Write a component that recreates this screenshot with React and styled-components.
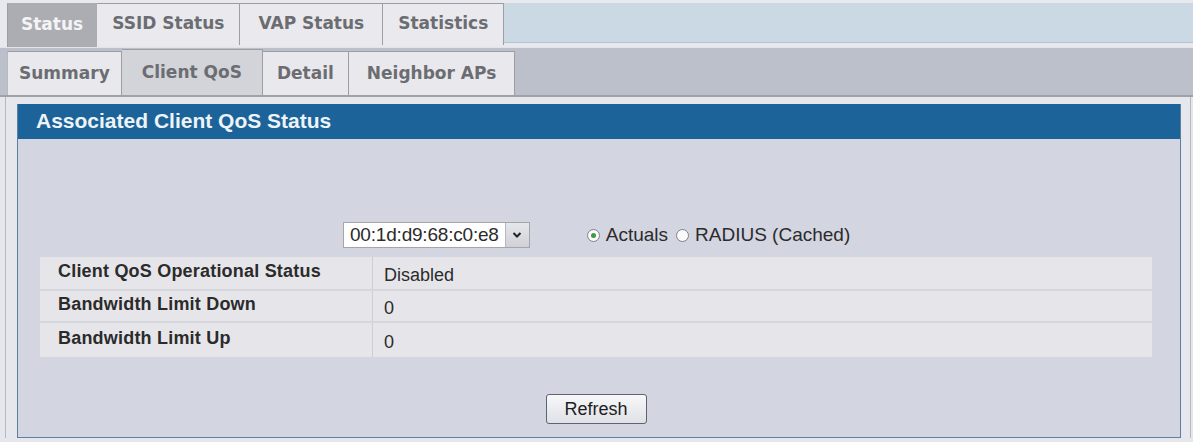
import React, { useState } from 'react';
import styled, { createGlobalStyle, css } from 'styled-components';

const GlobalStyle = createGlobalStyle`
  html, body {
    margin: 0;
    padding: 0;
    background: #e6e7ec;
  }
  body {
    font-family: "Liberation Sans", Arial, sans-serif;
  }
`;

const macs = ['00:1d:d9:68:c0:e8'];

const qosRows = [
  { label: 'Client QoS Operational Status', value: 'Disabled', height: 33 },
  { label: 'Bandwidth Limit Down', value: '0', height: 32 },
  { label: 'Bandwidth Limit Up', value: '0', height: 35 },
];

const App = () => {
  const [mode, setMode] = useState('actuals');

  return (
    <>
      <GlobalStyle />
      <Page>
        <TopTabs>
          <TopTab active pad={13}>Status</TopTab>
          <TopTab pad={15}>SSID Status</TopTab>
          <TopTab pad={18}>VAP Status</TopTab>
          <TopTab pad={15}>Statistics</TopTab>
          <TopFill />
        </TopTabs>

        <SubTabs>
          <SubTab pad={11}>Summary</SubTab>
          <SubTab active pad={20}>Client QoS</SubTab>
          <SubTab pad={14}>Detail</SubTab>
          <SubTab pad={18}>Neighbor APs</SubTab>
        </SubTabs>

        <Content>
          <Panel>
            <PanelHeader>Associated Client QoS Status</PanelHeader>
            <PanelBody>
              <Controls>
                <MacSelect>
                  <MacValue>{macs[0]}</MacValue>
                  <Arrow>
                    <svg width="10" height="8" viewBox="0 0 10 8">
                      <path d="M1.5 2 L5 5.5 L8.5 2" fill="none" stroke="#222" strokeWidth="2" />
                    </svg>
                  </Arrow>
                </MacSelect>
                <RadioGroup>
                  <RadioLabel onClick={() => setMode('actuals')}>
                    <Radio checked={mode === 'actuals'} />
                    Actuals
                  </RadioLabel>
                  <RadioLabel onClick={() => setMode('radius')}>
                    <Radio checked={mode === 'radius'} />
                    RADIUS (Cached)
                  </RadioLabel>
                </RadioGroup>
              </Controls>

              <QosTable>
                <tbody>
                  {qosRows.map((row) => (
                    <QosRow key={row.label} h={row.height}>
                      <LabelCell>{row.label}</LabelCell>
                      <ValueCell>{row.value}</ValueCell>
                    </QosRow>
                  ))}
                </tbody>
              </QosTable>

              <Actions>
                <RefreshButton type="button">Refresh</RefreshButton>
              </Actions>
            </PanelBody>
          </Panel>
        </Content>
      </Page>
    </>
  );
};

export default App;

const tabFont = css`
  font-family: "DejaVu Sans", Verdana, sans-serif;
  font-weight: bold;
  font-size: 17px;
  color: #6b6d72;
`;

const Page = styled.div`
  width: 1193px;
  height: 442px;
  overflow: hidden;
  background: #e6e7ec;
`;

const TopTabs = styled.div`
  display: flex;
  align-items: stretch;
  height: 47px;
  padding: 3px 0 0 7px;
  box-sizing: border-box;
  background: #e8e9ee;
`;

const TopTab = styled.div`
  ${tabFont};
  display: flex;
  align-items: center;
  padding: 0 ${({ pad }) => pad}px 3px;
  background: #eaeaee;
  border: 1px solid #9c9ea4;
  border-left: none;
  border-bottom: none;
  height: 42px;
  box-sizing: border-box;

  &:first-child {
    border-left: 1px solid #9c9ea4;
  }

  ${({ active }) =>
    active &&
    css`
      background: #abadb2;
      color: #f4f4f6;
      height: 44px;
      border-color: #abadb2;
    `}
`;

const TopFill = styled.div`
  flex: 1;
  height: 39px;
  background: #cad9e4;
  border-bottom: 1px solid #b4c3ce;
`;

const SubTabs = styled.div`
  display: flex;
  align-items: flex-end;
  height: 50px;
  padding: 0 0 0 7px;
  box-sizing: border-box;
  background: linear-gradient(#e3e4ea 0, #e3e4ea 1px, #bcc0cb 1px);
  border-bottom: 2px solid #9ea1a8;
`;

const SubTab = styled.div`
  ${tabFont};
  display: flex;
  align-items: center;
  height: 44px;
  padding: 0 ${({ pad }) => pad}px 2px;
  box-sizing: border-box;
  background: #e9e9ed;
  border: 1px solid #9c9ea4;
  border-left: none;
  border-bottom: none;

  &:first-child {
    border-left: 1px solid #b8bac0;
  }

  ${({ active }) =>
    active &&
    css`
      background: #d3d4d9;
      height: 46px;
    `}
`;

const Content = styled.div`
  margin: 0 2px 0 5px;
  padding: 7px 9px 0 11px;
  border-left: 1px solid #b5b8c0;
  border-right: 1px solid #b5b8c0;
`;

const Panel = styled.div`
  border: 1px solid #5a7fa0;
  border-top: none;
  background: #d3d6e0;
  height: 334px;
  box-sizing: border-box;
  display: flex;
  flex-direction: column;
`;

const PanelHeader = styled.div`
  background: #1b6399;
  color: #eef3f8;
  font-weight: bold;
  font-size: 21px;
  height: 35px;
  line-height: 34px;
  padding-left: 18px;
`;

const PanelBody = styled.div`
  flex: 1;
  padding: 0 28px 0 22px;
  display: flex;
  flex-direction: column;
`;

const Controls = styled.div`
  display: flex;
  align-items: center;
  margin: 83px 0 0 303px;
  height: 26px;
`;

const MacSelect = styled.div`
  display: flex;
  align-items: stretch;
  height: 26px;
  box-sizing: border-box;
  border: 1px solid #a4a6ac;
  background: #fff;
`;

const MacValue = styled.span`
  font-size: 19px;
  color: #2b2b2b;
  padding: 0 6px 0 6px;
  line-height: 24px;
  letter-spacing: -0.2px;
`;

const Arrow = styled.span`
  width: 23px;
  display: flex;
  align-items: center;
  justify-content: center;
  background: linear-gradient(#e6e7eb, #cfd1d7);
  border-left: 1px solid #b6b8be;
`;

const RadioGroup = styled.div`
  display: flex;
  align-items: center;
  margin-left: 57px;
  gap: 8px;
`;

const RadioLabel = styled.label`
  display: flex;
  align-items: center;
  gap: 6px;
  font-size: 19px;
  color: #2b2b2b;
  cursor: pointer;
`;

const Radio = styled.span`
  width: 11px;
  height: 11px;
  border-radius: 50%;
  border: 1px solid #7e8288;
  background: #fafafa;
  position: relative;

  ${({ checked }) =>
    checked &&
    css`
      &::after {
        content: '';
        position: absolute;
        left: 3px;
        top: 3px;
        width: 5px;
        height: 5px;
        border-radius: 50%;
        background: #3c9a48;
      }
    `}
`;

const QosTable = styled.table`
  margin-top: 9px;
  width: 100%;
  border-collapse: collapse;
  background: #e6e6ea;
`;

const QosRow = styled.tr`
  height: ${({ h }) => h}px;
`;

const cellBorder = css`
  border-bottom: 2px solid #d6d7dd;

  tr:last-child > & {
    border-bottom: none;
  }
`;

const LabelCell = styled.td`
  ${cellBorder};
  width: 314px;
  padding: 0 0 5px 18px;
  font-size: 18px;
  line-height: 20px;
  font-weight: bold;
  letter-spacing: 0.2px;
  color: #2b2b2b;
  border-right: 1px solid #cdcfd6;
`;

const ValueCell = styled.td`
  ${cellBorder};
  padding: 3px 0 0 11px;
  font-size: 18px;
  line-height: 20px;
  color: #2b2b2b;
`;

const Actions = styled.div`
  display: flex;
  justify-content: center;
  margin-top: 37px;
`;

const RefreshButton = styled.button`
  font-family: "Liberation Sans", Arial, sans-serif;
  font-size: 18px;
  color: #1e1e1e;
  width: 101px;
  height: 30px;
  padding: 0;
  border: 1px solid #5b6470;
  border-radius: 3px;
  background: linear-gradient(#f8f8fa, #dfe1e6);
`;
